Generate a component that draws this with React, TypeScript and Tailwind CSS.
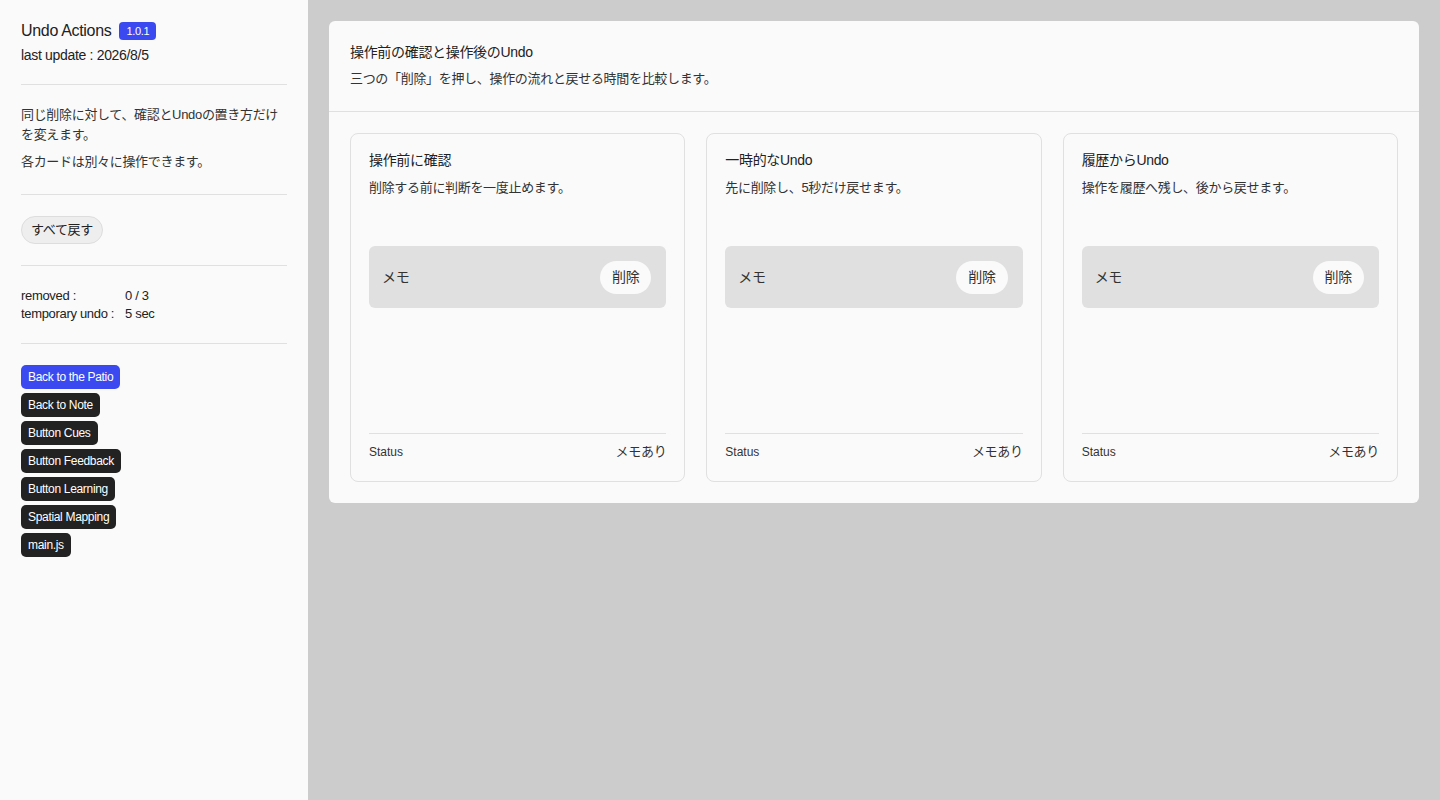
import React from 'react';

const font = { fontFamily: '"Liberation Sans", "Noto Sans CJK JP", Arial, sans-serif' };

const cards = [
  { title: '操作前に確認', desc: '削除する前に判断を一度止めます。' },
  { title: '一時的なUndo', desc: '先に削除し、5秒だけ戻せます。' },
  { title: '履歴からUndo', desc: '操作を履歴へ残し、後から戻せます。' },
];

const links = ['Back to Note', 'Button Cues', 'Button Feedback', 'Button Learning', 'Spatial Mapping', 'main.js'];

const Card: React.FC<{ title: string; desc: string }> = ({ title, desc }) => (
  <div className="flex-1 rounded-lg border border-[#e0e0e0] bg-[#fafafa] px-[18px] pt-[16px] pb-[19px]">
    <h3 className="text-[14px] leading-[20px] text-[#222]">{title}</h3>
    <p className="mt-[8px] text-[13px] leading-[20px] text-[#333]">{desc}</p>
    <div className="h-[235px] pt-[48px]">
      <div className="flex h-[62px] items-center justify-between rounded-md bg-[#e0e0e0] pl-[13px] pr-[15px]">
        <span className="text-[14px] text-[#333]">メモ</span>
        <button className="h-[33px] rounded-full bg-[#fafafa] px-[12px] text-[14px] text-[#333]">削除</button>
      </div>
    </div>
    <div className="flex items-center justify-between border-t border-[#e0e0e0] pt-[8px] text-[#333]">
      <span className="text-[12px] leading-[20px] tracking-normal">Status</span>
      <span className="text-[13px] leading-[20px]">メモあり</span>
    </div>
  </div>
);

export default function App() {
  return (
    <div className="flex min-h-[800px] w-full bg-[#cccccc] tracking-[-0.02em]" style={font}>
      {/* Sidebar */}
      <aside className="w-[308px] shrink-0 bg-[#fafafa] px-[21px] pt-[20px]">
        <div className="flex items-center gap-[8px]">
          <h1 className="text-[16px] leading-[22px] text-[#222]">Undo Actions</h1>
          <span className="rounded-[4px] bg-[#3b4af0] px-[7px] py-[2px] text-[11px] leading-[14px] text-white">1.0.1</span>
        </div>
        <p className="mt-[3px] text-[14px] leading-[20px] text-[#222]">last update : 2026/8/5</p>
        <hr className="mt-[19px] border-[#e0e0e0]" />
        <div className="pt-[20px] pb-[22px] text-[13px] leading-[20px] text-[#333]">
          <p>同じ削除に対して、確認とUndoの置き方だけを変えます。</p>
          <p className="mt-[7px]">各カードは別々に操作できます。</p>
        </div>
        <hr className="border-[#e0e0e0]" />
        <div className="py-[21px]">
          <button className="h-[28px] rounded-full border border-[#dddddd] bg-[#eeeeee] px-[9px] text-[13px] text-[#222]">すべて戻す</button>
        </div>
        <hr className="border-[#e0e0e0]" />
        <div className="pt-[21px] pb-[20px] text-[13px] leading-[18px] text-[#222]">
          <div className="flex"><span className="w-[104px]">removed :</span><span>0 / 3</span></div>
          <div className="flex"><span className="w-[104px]">temporary undo :</span><span>5 sec</span></div>
        </div>
        <hr className="border-[#e0e0e0]" />
        <nav className="flex flex-col items-start gap-[4px] pt-[21px]">
          <a className="rounded-[5px] bg-[#3b4af0] px-[7px] text-[12px] leading-[24px] text-white">Back to the Patio</a>
          {links.map((l) => (
            <a key={l} className="rounded-[5px] bg-[#222222] px-[7px] text-[12px] leading-[24px] text-white">{l}</a>
          ))}
        </nav>
      </aside>

      {/* Main */}
      <main className="flex-1 p-[21px]">
        <section className="rounded-md bg-[#fafafa]">
          <header className="border-b border-[#e0e0e0] px-[21px] pt-[21px] pb-[22px]">
            <h2 className="text-[14px] leading-[20px] text-[#222]">操作前の確認と操作後のUndo</h2>
            <p className="mt-[7px] text-[13px] leading-[20px] text-[#333]">三つの「削除」を押し、操作の流れと戻せる時間を比較します。</p>
          </header>
          <div className="flex gap-[21px] p-[21px]">
            {cards.map((c) => (
              <Card key={c.title} title={c.title} desc={c.desc} />
            ))}
          </div>
        </section>
      </main>
    </div>
  );
}
